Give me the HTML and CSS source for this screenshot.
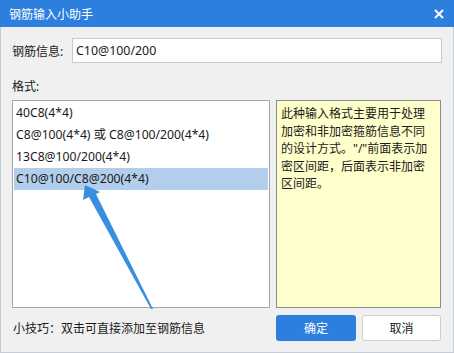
FILE: index.html
```html
<!DOCTYPE html>
<html lang="zh-CN">
<head>
    <meta charset="UTF-8">
    <title>钢筋输入小助手</title>
    <link rel="stylesheet" href="styles.css">
</head>
<body>
    <div class="window">
        <div class="titlebar">
            <span class="title">钢筋输入小助手</span>
            <svg class="close" width="10" height="10" viewBox="0 0 10 10">
                <path d="M1 1 L9 9 M9 1 L1 9" stroke="#fff" stroke-width="1.8" />
            </svg>
        </div>
        <div class="content">
            <div class="info-row">
                <span class="label">钢筋信息:</span>
                <div class="input">C10@100/200</div>
            </div>
            <div class="format-label">格式:</div>
            <div class="panels">
                <ul class="format-list">
                    <li>40C8(4*4)</li>
                    <li>C8@100(4*4) 或 C8@100/200(4*4)</li>
                    <li>13C8@100/200(4*4)</li>
                    <li class="selected">C10@100/C8@200(4*4)</li>
                </ul>
                <div class="hint">此种输入格式主要用于处理加密和非加密箍筋信息不同的设计方式。"/"前面表示加密区间距，后面表示非加密区间距。</div>
            </div>
            <div class="footer">
                <span class="tip">小技巧：双击可直接添加至钢筋信息</span>
                <div class="buttons">
                    <button class="btn ok">确定</button>
                    <button class="btn cancel">取消</button>
                </div>
            </div>
        </div>
        <!-- 标注箭头 -->
        <svg class="arrow" width="454" height="353" viewBox="0 0 454 353">
            <polygon points="85,185 100,192 96,194 153,309 151,309 89,197 83,200" fill="#3a8ee0" />
        </svg>
    </div>
</body>
</html>
```

FILE: styles.css
```css
* {
    box-sizing: border-box;
}
body {
    margin: 0;
    font-family: "Noto Sans", "Noto Sans CJK SC", sans-serif;
    font-size: 12px;
    color: #1a1a1a;
}
.window {
    position: relative;
    width: 454px;
    height: 353px;
    background-color: #f0f0f0;
    border: 1px solid #c6ccd5;
    border-top: none;
}
.titlebar {
    height: 27px;
    margin: 0 -1px;
    padding: 0 10px 0 9px;
    background-color: #2d7fde;
    color: #fff;
    display: flex;
    align-items: center;
    justify-content: space-between;
}
.title {
    font-size: 12px;
}
.content {
    padding: 11px 11px 0 11px;
}
.info-row {
    display: flex;
    align-items: center;
    height: 25px;
}
.label {
    width: 60px;
}
.input {
    flex: 1;
    height: 25px;
    line-height: 23px;
    padding-left: 3px;
    background-color: #fff;
    border: 1px solid #c8cad2;
    font-size: 12.4px;
}
.format-label {
    height: 16px;
    line-height: 16px;
    margin-top: 16px;
    margin-bottom: 5px;
}
.panels {
    display: flex;
    gap: 6px;
    height: 208px;
}
.format-list {
    width: 258px;
    margin: 0;
    padding: 1px;
    list-style: none;
    background-color: #fff;
    border: 1px solid #a6a6a6;
}
.format-list li {
    height: 22px;
    line-height: 22px;
    padding-left: 2px;
    font-size: 12.2px;
}
.format-list .selected {
    background-color: #b3cdec;
}
.hint {
    width: 165px;
    padding: 4px 6px 4px 4px;
    background-color: #ffffcc;
    border: 1px solid #8c8c8c;
    line-height: 17.5px;
}
.footer {
    margin-top: 7px;
    height: 26px;
    display: flex;
    align-items: center;
    justify-content: space-between;
}
.tip {
    padding-left: 1px;
}
.buttons {
    display: flex;
    gap: 6px;
    margin-right: 1px;
}
.btn {
    height: 26px;
    border-radius: 3px;
    font-family: inherit;
    font-size: 12px;
    cursor: pointer;
}
.ok {
    width: 80px;
    background-color: #2d7fde;
    border: none;
    color: #fff;
}
.cancel {
    width: 79px;
    background-color: #fff;
    border: 1px solid #cdcdcd;
    color: #1a1a1a;
}
.arrow {
    position: absolute;
    left: -1px;
    top: 0;
    pointer-events: none;
}
```
